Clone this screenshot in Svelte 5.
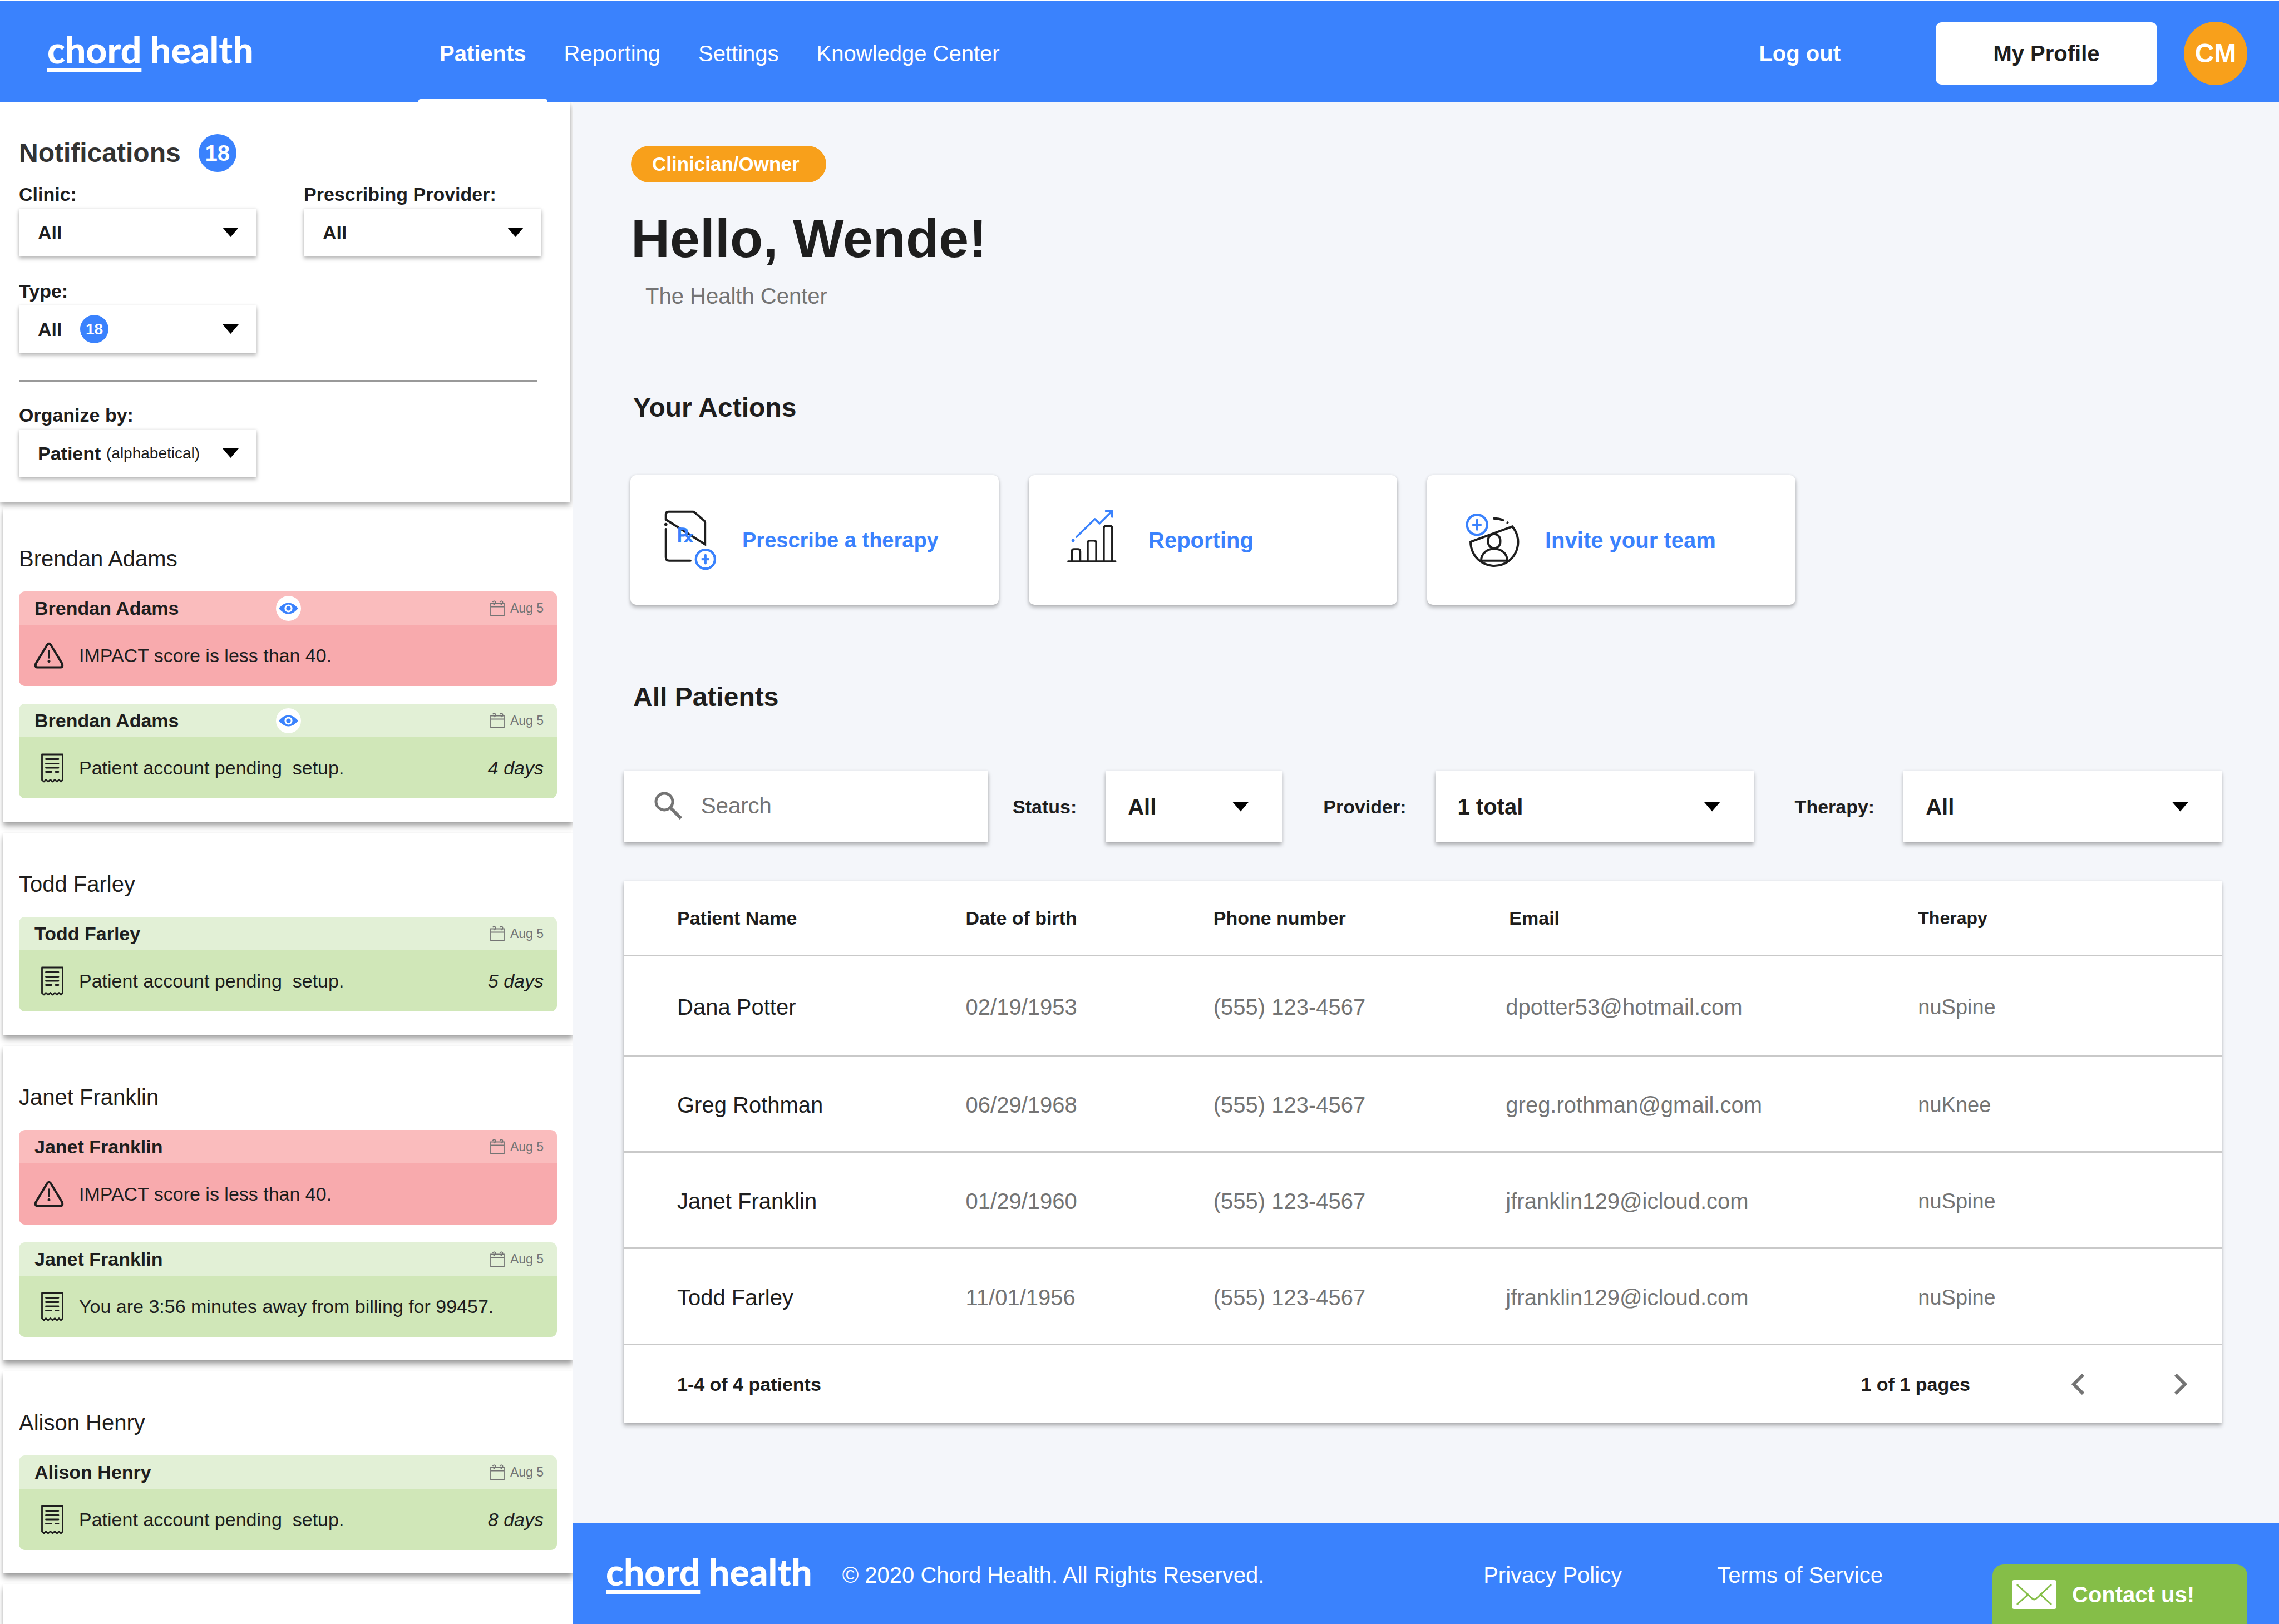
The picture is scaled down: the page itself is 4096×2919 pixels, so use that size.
<script>
  const groups = [
    {
      name: 'Brendan Adams',
      cards: [
        { kind: 'alert', seen: true, text: 'IMPACT score is less than 40.', age: '' },
        { kind: 'task', seen: true, text: 'Patient account pending  setup.', age: '4 days' }
      ]
    },
    {
      name: 'Todd Farley',
      cards: [{ kind: 'task', seen: false, text: 'Patient account pending  setup.', age: '5 days' }]
    },
    {
      name: 'Janet Franklin',
      cards: [
        { kind: 'alert', seen: false, text: 'IMPACT score is less than 40.', age: '' },
        { kind: 'task', seen: false, text: 'You are 3:56 minutes away from billing for 99457.', age: '' }
      ]
    },
    {
      name: 'Alison Henry',
      cards: [{ kind: 'task', seen: false, text: 'Patient account pending  setup.', age: '8 days' }]
    }
  ];

  const patients = [
    { name: 'Dana Potter', dob: '02/19/1953', phone: '(555) 123-4567', email: 'dpotter53@hotmail.com', therapy: 'nuSpine' },
    { name: 'Greg Rothman', dob: '06/29/1968', phone: '(555) 123-4567', email: 'greg.rothman@gmail.com', therapy: 'nuKnee' },
    { name: 'Janet Franklin', dob: '01/29/1960', phone: '(555) 123-4567', email: 'jfranklin129@icloud.com', therapy: 'nuSpine' },
    { name: 'Todd Farley', dob: '11/01/1956', phone: '(555) 123-4567', email: 'jfranklin129@icloud.com', therapy: 'nuSpine' }
  ];
</script>

{#snippet logo()}
  <a class="logo" href="#home"><span class="logo-mark">chord</span> health</a>
{/snippet}

<div class="page">
  <header class="topbar">
    <div class="brand">{@render logo()}</div>
    <nav class="tabs" aria-label="Main">
      <a class="tab active" href="#patients" aria-current="page">Patients</a>
      <a class="tab" href="#reporting">Reporting</a>
      <a class="tab" href="#settings">Settings</a>
      <a class="tab" href="#knowledge">Knowledge Center</a>
    </nav>
    <a class="logout" href="#logout">Log out</a>
    <button class="profile" type="button">My Profile</button>
    <span class="avatar">CM</span>
  </header>

  <div class="columns">
    <aside class="sidebar">
      <section class="filters">
        <h2 class="filters-title">Notifications <span class="badge">18</span></h2>
        <div class="filter-grid">
          <div class="field">
            <label for="clinic">Clinic:</label>
            <div class="select-box small"><select id="clinic"><option>All</option></select></div>
          </div>
          <div class="field">
            <label for="prescriber">Prescribing Provider:</label>
            <div class="select-box small"><select id="prescriber"><option>All</option></select></div>
          </div>
          <div class="field">
            <label for="type">Type:</label>
            <div class="select-box small">
              <select id="type"><option>All</option></select>
              <span class="badge mini">18</span>
            </div>
          </div>
        </div>
        <hr />
        <div class="filter-grid">
          <div class="field">
            <label for="organize">Organize by:</label>
            <div class="select-box small">
              <select id="organize"><option>Patient</option></select>
              <span class="hint">(alphabetical)</span>
            </div>
          </div>
        </div>
      </section>

      <div class="groups">
        {#each groups as group}
          <section class="group">
            <h3>{group.name}</h3>
            {#each group.cards as card}
              <article class="note {card.kind}">
                <header class="note-head">
                  <strong>{group.name}</strong>
                  <span class="note-eye">
                    {#if card.seen}
                      <svg class="eye" viewBox="0 0 45 45" aria-hidden="true">
                        <circle cx="22.500" cy="22.500" r="22.500" fill="#fff" />
                        <path d="M5 22.500C11 16 16 12.500 22.500 12.500S34 16 40 22.500C34 29 29 32.500 22.500 32.500S11 29 5 22.500Z" fill="#3a82fd" />
                        <circle cx="22.500" cy="22.500" r="5.600" fill="#3a82fd" stroke="#fff" stroke-width="3" />
                      </svg>
                    {/if}
                  </span>
                  <span class="note-date">
                    <svg class="calendar" viewBox="0 0 26 28" fill="none" stroke="#747474" stroke-width="1.800" aria-hidden="true">
                      <path d="M1 5.500H25V27H1ZM1 11.500H25" />
                      <path d="M4.500 3C6 0.500 9.500 1 9.500 4S7 8 6 6.500M17.500 3C19 0.500 22.500 1 22.500 4S20 8 19 6.500" />
                    </svg>
                    Aug 5
                  </span>
                </header>
                <div class="note-body">
                  {#if card.kind === 'alert'}
                    <svg class="note-icon" viewBox="0 0 54 54" fill="none" stroke="#1e1e1e" aria-hidden="true">
                      <path d="M22.500 8.500Q26 3 29.500 8.500L49.500 41.500Q52 48.500 46 48.500H6Q0 48.500 2.500 41.500Z" stroke-width="4" stroke-linejoin="round" />
                      <path d="M26 19V31" stroke-width="3.600" stroke-linecap="round" />
                      <circle cx="26" cy="37.500" r="2.500" fill="#1e1e1e" stroke="none" />
                    </svg>
                  {:else}
                    <svg class="note-icon" viewBox="0 0 54 54" fill="none" stroke="#1e1e1e" stroke-linecap="round" stroke-linejoin="round" aria-hidden="true">
                      <path d="M13.500 49V3H50.500V49L47.500 52L44 48.500L40.500 52L36.500 48.500L32.500 52L28.500 48.500L24.500 52L20.500 48.500L17 52Z" stroke-width="2.800" />
                      <path d="M20.500 11.500H43M20.500 19.500H43M20.500 27H43M20.500 34.500H30.500M38 34.500H43" stroke-width="2.800" />
                    </svg>
                  {/if}
                  <p>{card.text}</p>
                  {#if card.age}<em>{card.age}</em>{/if}
                </div>
              </article>
            {/each}
          </section>
        {/each}
        <section class="group rest" aria-hidden="true"></section>
      </div>
    </aside>

    <div class="content">
      <main>
        <section class="hero">
          <span class="chip">Clinician/Owner</span>
          <h1>Hello, Wende!</h1>
          <p>The Health Center</p>
        </section>

        <h2 class="section-title">Your Actions</h2>
        <div class="actions">
          <a class="action prescribe" href="#prescribe">
            <svg viewBox="0 17 540 540" fill="none" stroke="#1e1e1e" stroke-width="17" aria-hidden="true">
              <path d="M96 130V92Q96 71 117 71H302Q308 71 313 75L386 138Q393 144 393 152V318Z" />
              <path d="M96 203V417Q96 442 121 442H282" stroke-linecap="round" />
              <circle cx="96" cy="167" r="12" fill="#1e1e1e" stroke="none" />
              <text class="rx" x="180" y="300">℞</text>
              <g stroke="#3a82fd">
                <circle cx="396" cy="431" r="72" stroke-width="18" />
                <path d="M396 400V462" stroke-linecap="round" />
                <path d="M366 431H426" />
              </g>
            </svg>
            Prescribe a therapy
          </a>
          <a class="action report" href="#reporting">
            <svg viewBox="0 17 540 540" fill="none" stroke="#1e1e1e" stroke-width="15" stroke-linecap="round" aria-hidden="true">
              <path d="M67 447H425" />
              <path d="M94 447V372Q94 355 111 355H141Q158 355 158 372V447M215 447V306Q215 290 231 290H263Q279 290 279 306V447M337 447V195Q337 178 354 178H383Q400 178 400 195V447" />
              <g stroke="#3a82fd">
                <path d="M130 262L269 126L304 160L396 70M352 66H400V110" stroke-linejoin="round" />
                <circle cx="104" cy="288" r="12" fill="#3a82fd" stroke="none" />
              </g>
            </svg>
            Reporting
          </a>
          <a class="action invite" href="#invite">
            <svg viewBox="0 17 540 540" fill="none" stroke="#1e1e1e" stroke-width="17" aria-hidden="true">
              <path d="M110 299L426 183A180 180 0 1 1 110 299Z" />
              <rect x="243" y="240" width="92" height="108" rx="46" />
              <path d="M190 442C190 387 235 352 289 352S388 387 388 442Z" />
              <path d="M288 122Q325 122 356 135" stroke-linecap="round" />
              <path d="M386 161L395 147" stroke-width="14" />
              <g stroke="#3a82fd">
                <circle cx="159" cy="170" r="76" stroke-width="18" />
                <path d="M159 134V206" stroke-linecap="round" />
                <path d="M123 170H193" />
              </g>
            </svg>
            Invite your team
          </a>
        </div>

        <h2 class="section-title patients-title">All Patients</h2>
        <div class="toolbar">
          <label class="search">
            <svg viewBox="0 0 50 50" fill="none" stroke="#747474" aria-hidden="true">
              <circle cx="18" cy="18" r="15" stroke-width="5" />
              <path d="M29 29L48 48" stroke-width="6" />
            </svg>
            <input type="search" placeholder="Search" aria-label="Search patients" />
          </label>
          <div class="selectors">
            <div class="inline-field">
              <label for="status">Status:</label>
              <div class="select-box"><select id="status"><option>All</option></select></div>
            </div>
            <div class="inline-field">
              <label for="provider">Provider:</label>
              <div class="select-box"><select id="provider"><option>1 total</option></select></div>
            </div>
            <div class="inline-field">
              <label for="therapy">Therapy:</label>
              <div class="select-box"><select id="therapy"><option>All</option></select></div>
            </div>
          </div>
        </div>

        <section class="patients">
          <table>
            <thead>
              <tr>
                <th class="c-name" scope="col">Patient Name</th>
                <th class="c-dob" scope="col">Date of birth</th>
                <th class="c-phone" scope="col">Phone number</th>
                <th class="c-email" scope="col">Email</th>
                <th class="c-therapy" scope="col">Therapy</th>
              </tr>
            </thead>
            <tbody>
              {#each patients as patient}
                <tr>
                  <td>{patient.name}</td>
                  <td>{patient.dob}</td>
                  <td>{patient.phone}</td>
                  <td>{patient.email}</td>
                  <td class="therapy">{patient.therapy}</td>
                </tr>
              {/each}
            </tbody>
          </table>
          <div class="pager">
            <span class="count">1-4 of 4 patients</span>
            <span>1 of 1 pages</span>
            <div class="pager-buttons">
              <button type="button" aria-label="Previous page">
                <svg viewBox="0 0 27 38" fill="none" stroke="#747474" stroke-width="6" aria-hidden="true"><path d="M23 2L6 19L23 36" /></svg>
              </button>
              <button type="button" aria-label="Next page">
                <svg viewBox="0 0 27 38" fill="none" stroke="#747474" stroke-width="6" aria-hidden="true"><path d="M4 2L21 19L4 36" /></svg>
              </button>
            </div>
          </div>
        </section>
      </main>

      <footer class="footer">
        {@render logo()}
        <span class="copyright">© 2020 Chord Health. All Rights Reserved.</span>
        <a class="legal" href="#privacy">Privacy Policy</a>
        <a class="legal" href="#terms">Terms of Service</a>
        <button class="contact" type="button">
          <svg viewBox="0 0 80 52" aria-hidden="true">
            <rect width="80" height="52" rx="4" fill="#fff" />
            <path d="M9 8L36 33Q40 37 44 33L71 8M9 44L30 25M71 44L50 25" fill="none" stroke="#85be48" stroke-width="3" />
          </svg>
          Contact us!
        </button>
      </footer>
    </div>
  </div>
</div>

<style>
  :global(body) {
    margin: 0;
    background: #f4f6fa;
  }

  .page {
    --blue: #3a82fd;
    --ink: #1e1e1e;
    --muted: #747474;
    --lift: 0 5px 7px rgba(0, 0, 0, 0.26), 0 0 5px rgba(0, 0, 0, 0.1);
    display: flex;
    flex-direction: column;
    min-height: 100vh;
    color: var(--ink);
    font-family: 'Liberation Sans', Arial, sans-serif;
    font-size: 40px;
    line-height: 46px;
  }

  .page * {
    box-sizing: border-box;
  }

  h1,
  h2,
  h3,
  p {
    margin: 0;
  }

  a {
    color: inherit;
    text-decoration: none;
  }

  button,
  input,
  select {
    margin: 0;
    padding: 0;
    border: 0;
    background: none;
    color: inherit;
    font: inherit;
  }

  svg {
    display: block;
    flex: none;
  }

  /* Top bar */
  .topbar {
    display: flex;
    align-items: center;
    height: 184px;
    padding: 6px 57px 0 85px;
    border-top: 2px solid #fff;
    background: var(--blue);
    color: #fff;
  }

  .brand {
    flex: 0 0 671px;
    padding-bottom: 14px;
  }

  .logo {
    color: #fff;
    font-family: Lato, 'Open Sans', sans-serif;
    font-size: 66px;
    font-weight: 900;
    line-height: 80px;
    white-space: nowrap;
  }

  .logo-mark {
    text-decoration: underline;
    text-decoration-thickness: 7px;
    text-decoration-skip-ink: none;
    text-underline-offset: 8px;
  }

  .tabs {
    display: flex;
    align-self: stretch;
    margin-right: auto;
  }

  .tab {
    position: relative;
    display: flex;
    align-items: center;
    padding: 0 34px;
  }

  .tab.active {
    font-weight: 700;
  }

  .tab.active::after {
    content: '';
    position: absolute;
    right: -4px;
    bottom: 0;
    left: -4px;
    height: 6px;
    border-radius: 4px 4px 0 0;
    background: #fff;
  }

  .logout {
    margin-right: 171px;
    font-weight: 700;
  }

  .profile {
    width: 398px;
    height: 112px;
    margin-right: 48px;
    border-radius: 11px;
    background: #fff;
    color: var(--ink);
    font-weight: 700;
  }

  .avatar {
    display: grid;
    place-items: center;
    width: 114px;
    height: 114px;
    border-radius: 50%;
    background: #f8a01b;
    font-size: 48px;
    font-weight: 700;
  }

  /* Page columns */
  .columns {
    display: grid;
    flex: 1;
    grid-template-columns: minmax(0, 1029fr) minmax(0, 3067fr);
  }

  .sidebar {
    display: flex;
    flex-direction: column;
    overflow: hidden;
    background: #fff;
    font-size: 34px;
    line-height: 40px;
  }

  .filters {
    z-index: 1;
    margin-right: 4px;
    padding: 57px 52px 45px 34px;
    background: #fff;
    box-shadow: 0 6px 10px rgba(0, 0, 0, 0.3), 0 0 6px rgba(0, 0, 0, 0.12);
  }

  .filters-title {
    display: flex;
    gap: 32px;
    align-items: center;
    margin-bottom: 20px;
    color: #333;
    font-size: 48px;
    line-height: 56px;
  }

  .badge {
    display: grid;
    place-items: center;
    width: 68px;
    height: 68px;
    border-radius: 50%;
    background: var(--blue);
    color: #fff;
    font-size: 40px;
    font-weight: 700;
  }

  .filter-grid {
    display: grid;
    grid-template-columns: 1fr 1fr;
    gap: 43px 85px;
  }

  .field {
    display: grid;
    gap: 6px;
  }

  label {
    font-weight: 700;
  }

  .select-box {
    display: grid;
    flex: 1;
    align-items: center;
    height: 128px;
    background: #fff;
    box-shadow: var(--lift);
    font-size: 40px;
  }

  .select-box > :global(*),
  .select-box::after {
    grid-area: 1 / 1;
  }

  .select-box::after {
    content: '';
    justify-self: end;
    width: 29px;
    height: 17px;
    margin-right: 60px;
    background: #000;
    clip-path: polygon(0 0, 100% 0, 50% 100%);
    pointer-events: none;
  }

  .select-box select {
    width: 100%;
    height: 100%;
    padding: 0 100px 0 40px;
    appearance: none;
    font-weight: 700;
  }

  .select-box.small {
    height: 85px;
    font-size: 34px;
  }

  .select-box.small select {
    padding: 0 80px 0 34px;
  }

  .select-box.small::after {
    margin-right: 32px;
  }

  .badge.mini {
    width: 51px;
    height: 51px;
    margin-left: 110px;
    font-size: 28px;
    pointer-events: none;
  }

  .hint {
    margin-left: 157px;
    font-size: 28px;
    pointer-events: none;
  }

  hr {
    height: 3px;
    margin: 49px 8px 40px 0;
    border: 0;
    background: #999;
  }

  .groups {
    display: flex;
    flex: 1;
    flex-direction: column;
    gap: 20px;
    padding: 10px 0 0 6px;
  }

  .group {
    display: grid;
    gap: 32px;
    padding: 69px 28px 42px;
    background: #fff;
    box-shadow: 0 8px 10px rgba(0, 0, 0, 0.32), 0 2px 5px rgba(0, 0, 0, 0.12);
  }

  .group.rest {
    flex: 1;
    padding: 0;
  }

  .group h3 {
    margin-bottom: 4px;
    font-size: 40px;
    font-weight: 400;
    line-height: 46px;
  }

  .note {
    overflow: hidden;
    border-radius: 11px;
  }

  .note-head {
    display: grid;
    grid-template-columns: 434px 1fr auto;
    align-items: center;
    height: 60px;
    padding: 0 24px 0 28px;
  }

  .note-body {
    display: flex;
    gap: 26px;
    align-items: center;
    height: 110px;
    padding: 0 24px 0 28px;
  }

  .alert .note-head {
    background: #fabcbd;
  }

  .alert .note-body {
    background: #f8aaad;
  }

  .task .note-head {
    background: #e2f0d6;
  }

  .task .note-body {
    background: #d0e7b8;
  }

  .eye {
    width: 45px;
    height: 45px;
  }

  .note-date {
    display: flex;
    gap: 10px;
    align-items: center;
    color: var(--muted);
    font-size: 23px;
  }

  .calendar {
    width: 26px;
    height: 28px;
  }

  .note-icon {
    width: 54px;
    height: 54px;
  }

  .note-body p {
    flex: 1;
    white-space: pre;
  }

  /* Main content */
  .content {
    display: flex;
    flex-direction: column;
  }

  main {
    flex: 1;
    padding: 78px 103px 60px 92px;
  }

  .hero {
    padding-left: 13px;
  }

  .chip {
    display: inline-block;
    min-width: 351px;
    padding: 0 38px;
    border-radius: 33px;
    background: #f8a01b;
    color: #fff;
    font-size: 35px;
    font-weight: 700;
    line-height: 66px;
    vertical-align: top;
  }

  h1 {
    margin-top: 46px;
    font-size: 97px;
    line-height: 110px;
  }

  .hero p {
    margin-top: 25px;
    padding-left: 26px;
    color: var(--muted);
  }

  .section-title {
    margin: 150px 0 93px;
    padding-left: 17px;
    font-size: 48px;
    line-height: 56px;
  }

  .actions {
    display: grid;
    grid-template-columns: repeat(3, 1fr);
    gap: 54px;
    max-width: 2106px;
    padding-left: 12px;
  }

  .action {
    display: flex;
    gap: 32px;
    align-items: center;
    height: 233px;
    border-radius: 10px;
    background: #fff;
    box-shadow: var(--lift);
    color: var(--blue);
    font-weight: 700;
  }

  .action svg {
    width: 128px;
    height: 128px;
  }

  .prescribe {
    padding-left: 41px;
    font-size: 38px;
  }

  .report {
    padding-left: 55px;
  }

  .invite {
    padding-left: 52px;
  }

  .rx {
    fill: var(--blue);
    stroke: var(--blue);
    stroke-width: 6px;
    font-family: 'DejaVu Serif', 'DejaVu Sans', serif;
    font-size: 146px;
    font-weight: 400;
  }

  .patients-title {
    margin: 138px 0 105px;
  }

  .toolbar {
    display: grid;
    grid-template-columns: minmax(0, 655fr) minmax(0, 2173fr);
    gap: 44px;
  }

  .search {
    display: flex;
    gap: 34px;
    align-items: center;
    height: 128px;
    padding: 0 40px 4px 55px;
    background: #fff;
    box-shadow: var(--lift);
    font-weight: 400;
  }

  .search svg {
    width: 50px;
    height: 50px;
  }

  .search input {
    flex: 1;
    min-width: 0;
    outline: none;
    appearance: none;
  }

  .search input::placeholder {
    color: var(--muted);
    opacity: 1;
  }

  .selectors {
    display: grid;
    grid-template-columns: 484fr 773fr 767fr;
    gap: 74px;
  }

  .inline-field {
    display: flex;
    gap: 52px;
    align-items: center;
  }

  .inline-field label {
    font-size: 34px;
  }

  .patients {
    margin-top: 70px;
    background: #fff;
    box-shadow: var(--lift);
  }

  table {
    width: 100%;
    border-spacing: 0;
    table-layout: fixed;
  }

  .c-name {
    width: 21.4%;
  }

  .c-dob {
    width: 15.5%;
  }

  .c-phone {
    width: 18.3%;
  }

  .c-email {
    width: 25.8%;
    padding-left: 6px;
  }

  th {
    height: 135px;
    padding: 0;
    border-bottom: 3px solid #c9c9c9;
    font-size: 34px;
    text-align: left;
  }

  .c-therapy {
    font-size: 32px;
  }

  td {
    height: 173px;
    padding: 4px 0 0;
    border-bottom: 3px solid #c9c9c9;
    color: var(--muted);
  }

  .therapy {
    font-size: 38px;
  }

  tbody tr:first-child td {
    height: 180px;
  }

  th:first-child,
  td:first-child {
    padding-left: 96px;
    color: var(--ink);
  }

  .pager {
    display: flex;
    align-items: center;
    height: 140px;
    padding: 0 60px 0 96px;
    font-size: 34px;
    font-weight: 700;
  }

  .count {
    margin-right: auto;
  }

  .pager-buttons {
    display: flex;
    gap: 158px;
    margin-left: 180px;
  }

  .pager button {
    width: 27px;
    height: 38px;
  }

  .pager svg {
    width: 27px;
    height: 38px;
  }

  /* Footer */
  .footer {
    display: flex;
    align-items: center;
    height: 181px;
    padding: 4px 57px 0 60px;
    background: var(--blue);
    color: #fff;
  }

  .footer .logo {
    padding-bottom: 12px;
  }

  .copyright {
    margin: 0 auto 0 54px;
  }

  .legal {
    margin-right: 171px;
  }

  .legal + .contact {
    margin-left: 26px;
  }

  .contact {
    display: flex;
    gap: 28px;
    align-items: center;
    align-self: flex-end;
    width: 458px;
    height: 107px;
    padding-left: 35px;
    border-radius: 20px 20px 0 0;
    background: #85be48;
    font-weight: 700;
  }

  .contact svg {
    width: 80px;
    height: 52px;
  }
</style>
